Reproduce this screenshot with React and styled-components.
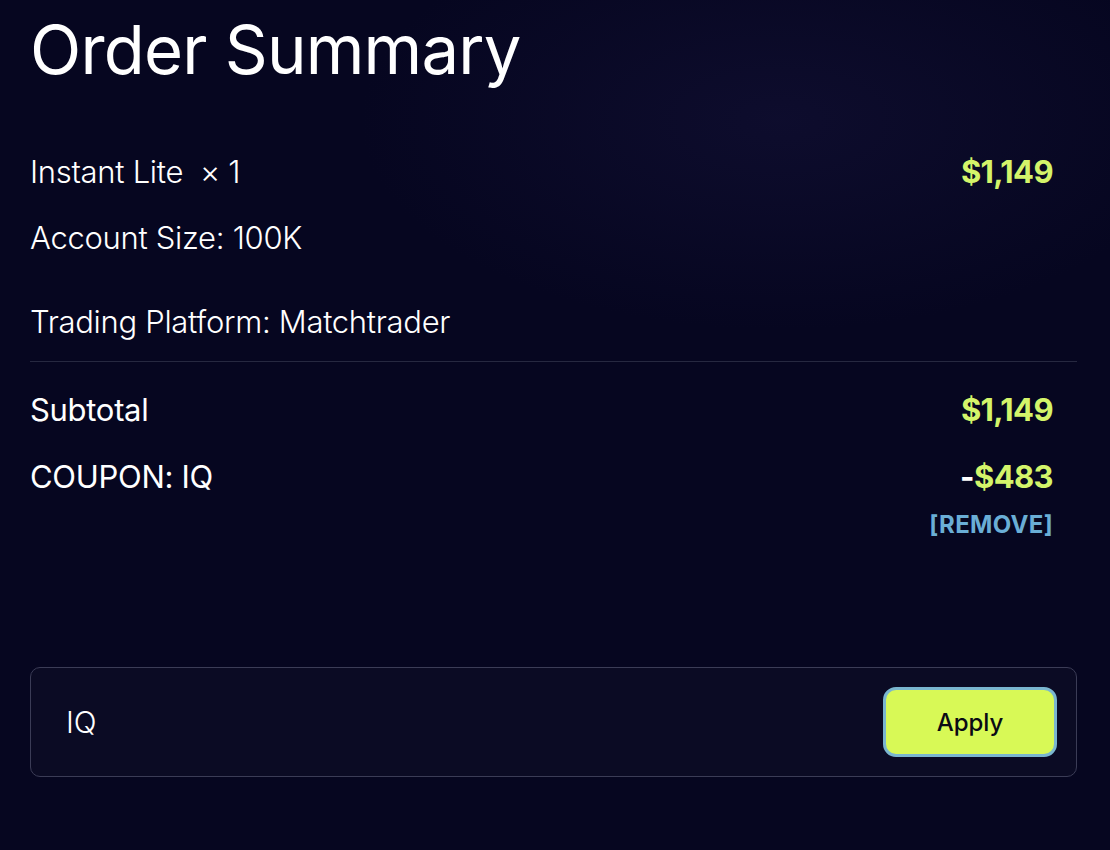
import React from 'react';
import styled, { createGlobalStyle } from 'styled-components';

const Global = createGlobalStyle`
  html, body { margin: 0; padding: 0; background: #060620; }
  body { font-family: Inter, "Noto Sans", sans-serif; color: #fff; }
`;

const Page = styled.div`
  min-height: 850px;
  background: radial-gradient(600px 300px at 780px 120px, rgba(20, 18, 56, 0.55), transparent 70%), #060620;
  padding: 10px 33px 0 30px;
  box-sizing: border-box;
`;

const Title = styled.h1`
  margin: 0 0 61px;
  font-size: 67px;
  font-weight: 400;
  letter-spacing: -0.8px;
  line-height: 80px;
`;

const Row = styled.div`
  display: flex;
  justify-content: space-between;
  align-items: center;
  padding-right: 24px;
  height: 40px;
  margin-bottom: ${(p) => p.mb || 0}px;
`;

const Label = styled.span`
  font-size: 31px;
  font-weight: ${(p) => (p.strong ? 400 : 300)};
  letter-spacing: -0.3px;
  white-space: pre;
`;

const Price = styled.span`
  font-size: 31px;
  font-weight: 700;
  color: #d4f46a;
  letter-spacing: -0.6px;
`;

const Minus = styled.span`
  color: #fff;
`;

const Divider = styled.hr`
  border: 0;
  border-top: 1px solid #262840;
  margin: 20px 0 27px;
`;

const RemoveRow = styled.div`
  display: flex;
  justify-content: flex-end;
  padding-right: 24px;
  margin-top: 14px;
`;

const Remove = styled.button`
  background: none;
  border: 0;
  padding: 0;
  font-family: inherit;
  font-size: 24px;
  font-weight: 700;
  color: #6aaed6;
  letter-spacing: 0.3px;
  cursor: pointer;
`;

const CouponBox = styled.div`
  margin-top: 128px;
  height: 110px;
  box-sizing: border-box;
  border: 1.5px solid #3b3c56;
  border-radius: 10px;
  background: #0b0b24;
  display: flex;
  align-items: center;
  padding: 0 19px 0 33px;
`;

const CouponInput = styled.input`
  flex: 1;
  background: transparent;
  border: 0;
  outline: none;
  color: #fff;
  font-family: inherit;
  font-size: 30px;
  font-weight: 300;
`;

const ApplyButton = styled.button`
  width: 174px;
  height: 70px;
  border-radius: 13px;
  border: 3px solid #7ab6cf;
  background: #d8f956;
  color: #0a0a14;
  font-family: inherit;
  font-size: 24px;
  font-weight: 550;
  cursor: pointer;
`;

export default function App() {
  return (
    <Page>
      <Global />
      <Title>Order Summary</Title>
      <Row mb={26}>
        <Label>Instant Lite  × 1</Label>
        <Price>$1,149</Price>
      </Row>
      <Row mb={44}>
        <Label>Account Size: 100K</Label>
      </Row>
      <Row>
        <Label>Trading Platform: Matchtrader</Label>
      </Row>
      <Divider />
      <Row mb={27}>
        <Label strong>Subtotal</Label>
        <Price>$1,149</Price>
      </Row>
      <Row>
        <Label strong>COUPON: IQ</Label>
        <Price><Minus>-</Minus>$483</Price>
      </Row>
      <RemoveRow>
        <Remove>[REMOVE]</Remove>
      </RemoveRow>
      <CouponBox>
        <CouponInput defaultValue="IQ" />
        <ApplyButton>Apply</ApplyButton>
      </CouponBox>
    </Page>
  );
}
